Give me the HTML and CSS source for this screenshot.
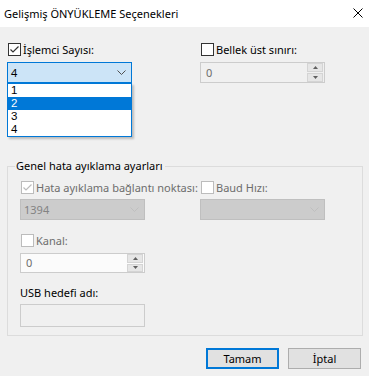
FILE: index.html
```html
<!DOCTYPE html>
<html lang="tr">
<head>
<meta charset="utf-8">
<title>Gelişmiş ÖNYÜKLEME Seçenekleri</title>
<link rel="stylesheet" href="styles.css">
</head>
<body>
<div class="titlebar">
  <span class="title">Gelişmiş ÖNYÜKLEME Seçenekleri</span>
  <svg class="close" width="10" height="10" viewBox="0 0 10 10"><path d="M0.5 0.5 L9.5 9.5 M9.5 0.5 L0.5 9.5" stroke="#000" stroke-width="1" fill="none"/></svg>
</div>
<div class="page">
  <div class="cols top">
    <div class="col">
      <label class="check">
        <span class="box"><svg width="11" height="11" viewBox="0 0 11 11"><path d="M1.5 5.5 L4 8 L9.5 2.5" stroke="#333" stroke-width="1.2" fill="none"/></svg></span>
        <span>İşlemci Sayısı:</span>
      </label>
      <div class="combo-wrap">
        <div class="combo focus">
          <span class="combo-val">4</span>
          <svg class="chev" width="9" height="5" viewBox="0 0 9 5"><polyline points="0.5,0.5 4.5,4.5 8.5,0.5" stroke="#505050" stroke-width="1" fill="none"/></svg>
        </div>
        <ul class="dropdown">
          <li>1</li>
          <li class="sel">2</li>
          <li>3</li>
          <li>4</li>
        </ul>
      </div>
    </div>
    <div class="col">
      <label class="check">
        <span class="box"></span>
        <span>Bellek üst sınırı:</span>
      </label>
      <div class="spin disabled">
        <span class="spin-val">0</span>
        <div class="spin-btns">
          <span class="sbtn"><svg width="5" height="3" viewBox="0 0 5 3"><polygon points="0,3 2.5,0 5,3" fill="#606060"/></svg></span>
          <span class="sbtn"><svg width="5" height="3" viewBox="0 0 5 3"><polygon points="0,0 5,0 2.5,3" fill="#606060"/></svg></span>
        </div>
      </div>
    </div>
  </div>

  <fieldset class="group">
    <legend>Genel hata ayıklama ayarları</legend>
    <div class="cols inner">
      <div class="col">
        <label class="check dis">
          <span class="box"><svg width="11" height="11" viewBox="0 0 11 11"><path d="M1.5 5.5 L4 8 L9.5 2.5" stroke="#bcbcbc" stroke-width="1.2" fill="none"/></svg></span>
          <span>Hata ayıklama bağlantı noktası:</span>
        </label>
        <div class="combo disabled">
          <span class="combo-val">1394</span>
          <svg class="chev" width="9" height="5" viewBox="0 0 9 5"><polyline points="0.5,0.5 4.5,4.5 8.5,0.5" stroke="#bfbfbf" stroke-width="1" fill="none"/></svg>
        </div>
        <label class="check dis gap-top">
          <span class="box"></span>
          <span>Kanal:</span>
        </label>
        <div class="spin light">
          <span class="spin-val">0</span>
          <div class="spin-btns">
            <span class="sbtn"><svg width="5" height="3" viewBox="0 0 5 3"><polygon points="0,3 2.5,0 5,3" fill="#606060"/></svg></span>
            <span class="sbtn"><svg width="5" height="3" viewBox="0 0 5 3"><polygon points="0,0 5,0 2.5,3" fill="#606060"/></svg></span>
          </div>
        </div>
        <div class="field-label">USB hedefi adı:</div>
        <div class="textbox"></div>
      </div>
      <div class="col">
        <label class="check dis">
          <span class="box"></span>
          <span>Baud Hızı:</span>
        </label>
        <div class="combo disabled">
          <span class="combo-val"></span>
          <svg class="chev" width="9" height="5" viewBox="0 0 9 5"><polyline points="0.5,0.5 4.5,4.5 8.5,0.5" stroke="#bfbfbf" stroke-width="1" fill="none"/></svg>
        </div>
      </div>
    </div>
  </fieldset>

  <div class="buttons">
    <button class="btn default">Tamam</button>
    <button class="btn">İptal</button>
  </div>
</div>
</body>
</html>
```
FILE: styles.css
```css
* { box-sizing: border-box; }
html, body { margin: 0; padding: 0; }
body {
  width: 369px;
  height: 376px;
  overflow: hidden;
  background: #f0f0f0;
  font-family: "Noto Sans", sans-serif;
  font-size: 11px;
  line-height: 15px;
  color: #000;
}
.titlebar {
  height: 27px;
  background: #fff;
  display: flex;
  align-items: center;
  justify-content: space-between;
  padding: 0 6px 0 4px;
}
.title { line-height: 27px; font-size: 11px; }
.close { display: block; margin-top: -2px; }

.page { padding: 0 6px 0 7px; }

.cols { display: grid; grid-template-columns: 125px 125px; }
.top { margin-top: 16px; column-gap: 68px; }
.inner { column-gap: 55px; }
.col { display: flex; flex-direction: column; min-width: 0; }

.check {
  display: flex;
  align-items: center;
  height: 13px;
  white-space: nowrap;
  margin-bottom: 6px;
}
.box {
  width: 13px;
  height: 13px;
  flex: none;
  margin-left: 1px;
  margin-right: 2px;
  border: 1px solid #333;
  background: #fff;
  display: flex;
  align-items: center;
  justify-content: center;
}
.check.dis { color: #6d6d6d; margin-bottom: 5px; }
.check.dis .box { border-color: #bcbcbc; }
.check.gap-top { margin-top: 14px; margin-bottom: 6px; }

.combo-wrap { position: relative; }
.combo {
  height: 21px;
  border: 1px solid #bfbfbf;
  display: flex;
  align-items: center;
  padding: 0 5px 0 3px;
}
.combo-val { flex: 1; }
.combo.focus { background: #cce4f7; border-color: #0078d7; }
.combo.disabled { background: #cccccc; color: #838383; }
.chev { display: block; }

.dropdown {
  position: absolute;
  left: 0;
  top: 100%;
  width: 125px;
  margin: 0;
  padding: 0;
  list-style: none;
  background: #fff;
  border: 1px solid #0078d7;
  box-shadow: 2px 2px 2px rgba(0, 0, 0, 0.22);
  z-index: 5;
}
.dropdown li {
  height: 13px;
  line-height: 13px;
  padding-left: 3px;
  font-family: "Liberation Sans", sans-serif;
  font-size: 11.5px;
  overflow: hidden;
}
.dropdown li.sel { background: #0078d7; color: #fff; }

.spin {
  height: 21px;
  border: 1px solid #cccccc;
  display: flex;
  background: #f0f0f0;
  color: #6d6d6d;
}
.spin.light { height: 20px; background: #fbfbfb; }
.spin-val { flex: 1; padding-left: 5px; line-height: 19px; }
.spin.light .spin-val { line-height: 18px; }
.spin-btns {
  width: 17px;
  display: flex;
  flex-direction: column;
  gap: 1px;
  padding: 0 1px 0 0;
}
.sbtn {
  flex: 1;
  background: #e6e6e6;
  border: 1px solid #d4d4d4;
  display: flex;
  align-items: center;
  justify-content: center;
}
.sbtn svg { display: block; }

.group {
  margin: 75px 0 0 0;
  min-width: 0;
  border: 1px solid #dcdcdc;
  padding: 7px 12px 8px 12px;
}
.group legend {
  margin-left: -5px;
  padding: 0 2px 0 1px;
  line-height: 16px;
}
.field-label { margin-top: 12px; line-height: 16px; }
.textbox {
  margin-top: 3px;
  height: 23px;
  border: 1px solid #cccccc;
  background: #f0f0f0;
}

.buttons {
  display: flex;
  justify-content: flex-end;
  gap: 9px;
  margin-top: 12px;
  padding-right: 2px;
}
.btn {
  width: 73px;
  height: 21px;
  padding: 0;
  margin: 0;
  border: 1px solid #adadad;
  background: #e1e1e1;
  font: inherit;
  color: #000;
}
.btn.default { border: 2px solid #0078d7; }
```
